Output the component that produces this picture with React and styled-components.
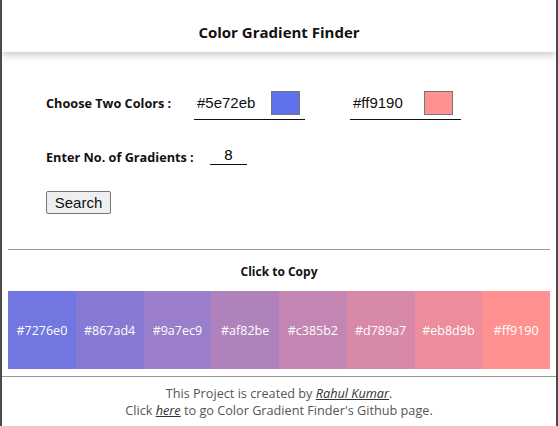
import React, { useState } from 'react';
import styled, { createGlobalStyle } from 'styled-components';

const GlobalStyle = createGlobalStyle`
    html, body {
        margin: 0;
        padding: 0;
        background: #4a4a4a;
    }
    body {
        font-family: "Open Sans", "Noto Sans", sans-serif;
    }
`;

const Ventana = styled.div`
    position: relative;
    margin: 0 2px;
    height: 426px;
    background: #ffffff;
    overflow: hidden;
`;

const MarcaVerde = styled.div`
    position: absolute;
    left: -2px;
    top: 117px;
    width: 2px;
    height: 20px;
    background: #7cbf1a;
`;

const Cabecera = styled.header`
    height: 52px;
    box-sizing: border-box;
    padding-top: 12px;
    display: flex;
    align-items: center;
    justify-content: center;
    background: #ffffff;
    box-shadow: 0 3px 8px rgba(0, 0, 0, 0.22);
    position: relative;
    z-index: 1;
`;

const Titulo = styled.h1`
    margin: 0;
    font-size: 15px;
    font-weight: 700;
    color: #111;
`;

const Formulario = styled.form`
    display: flex;
    flex-direction: column;
    padding: 31px 0 0 44px;
`;

const Fila = styled.div`
    display: flex;
    align-items: center;
    height: ${p => p.h || 32}px;
    margin-bottom: ${p => p.mb || 0}px;
`;

const Etiqueta = styled.label`
    font-size: 12.7px;
    font-weight: 700;
    color: #111;
    width: ${p => p.w}px;
`;

const CampoColor = styled.div`
    display: flex;
    align-items: center;
    width: 111px;
    height: 34px;
    padding-left: 3px;
    box-sizing: border-box;
    border-bottom: 1.5px solid #111;
    margin-right: ${p => p.mr || 0}px;
`;

const TextoColor = styled.span`
    font-family: "Liberation Sans", Arial, sans-serif;
    font-size: 15px;
    color: #111;
    width: ${p => p.w}px;
`;

const Muestra = styled.span`
    width: 27px;
    height: 22px;
    background: ${p => p.color};
    border: 1px solid #777;
`;

const CampoNumero = styled.input`
    width: 37px;
    height: 18px;
    border: none;
    border-bottom: 1.5px solid #111;
    font-family: "Liberation Sans", Arial, sans-serif;
    font-size: 15px;
    text-align: center;
    padding: 0;
    margin-bottom: 4px;
    outline: none;
`;

const Boton = styled.button`
    font-family: "Liberation Sans", Arial, sans-serif;
    font-size: 15px;
    color: #111;
    background: #efefef;
    border: 1px solid #767676;
    border-radius: 2px;
    width: 65px;
    height: 23px;
    padding: 0;
`;

const Separador = styled.hr`
    margin: 33px 6px 0;
    border: none;
    border-top: 1.5px solid #999;
`;

const Subtitulo = styled.h2`
    margin: 13px 0 0;
    text-align: center;
    font-size: 12px;
    font-weight: 700;
    color: #111;
`;

const Paleta = styled.div`
    display: grid;
    grid-template-columns: repeat(8, 1fr);
    margin: 11px 6px 0;
    height: 78px;
`;

const Bloque = styled.div`
    display: flex;
    align-items: center;
    justify-content: center;
    background: ${p => p.color};
    color: #ffffff;
    font-size: 12.5px;
    cursor: pointer;
`;

const LineaPie = styled.div`
    margin-top: 7px;
    border-top: 1.5px solid #999;
`;

const Pie = styled.footer`
    padding-top: 8px;
    text-align: center;
    font-size: 12.7px;
    line-height: 17px;
    color: #555;
`;

const Enlace = styled.a`
    font-style: italic;
    color: #333;
    text-decoration: underline;
`;

const gradientes = ['#7276e0', '#867ad4', '#9a7ec9', '#af82be', '#c385b2', '#d789a7', '#eb8d9b', '#ff9190'];

export default function App() {
    const [numero, setNumero] = useState('8');

    return (
        <>
            <GlobalStyle />
            <Ventana>
                <MarcaVerde />
                <Cabecera>
                    <Titulo>Color Gradient Finder</Titulo>
                </Cabecera>

                <Formulario onSubmit={e => e.preventDefault()}>
                    <Fila h={40} mb={20}>
                        <Etiqueta w={148}>Choose Two Colors :</Etiqueta>
                        <CampoColor mr={45}>
                            <TextoColor w={74}>#5e72eb</TextoColor>
                            <Muestra color="#5e72eb" />
                        </CampoColor>
                        <CampoColor>
                            <TextoColor w={71}>#ff9190</TextoColor>
                            <Muestra color="#ff9190" />
                        </CampoColor>
                    </Fila>
                    <Fila h={28} mb={19}>
                        <Etiqueta w={164}>Enter No. of Gradients :</Etiqueta>
                        <CampoNumero value={numero} onChange={e => setNumero(e.target.value)} />
                    </Fila>
                    <Fila h={24} mb={2}>
                        <Boton type="submit">Search</Boton>
                    </Fila>
                </Formulario>

                <Separador />
                <Subtitulo>Click to Copy</Subtitulo>
                <Paleta>
                    {gradientes.map(c => (
                        <Bloque key={c} color={c}>{c}</Bloque>
                    ))}
                </Paleta>
                <LineaPie />
                <Pie>
                    This Project is created by <Enlace>Rahul Kumar</Enlace>.<br />
                    Click <Enlace>here</Enlace> to go Color Gradient Finder's Github page.
                </Pie>
            </Ventana>
        </>
    );
}
